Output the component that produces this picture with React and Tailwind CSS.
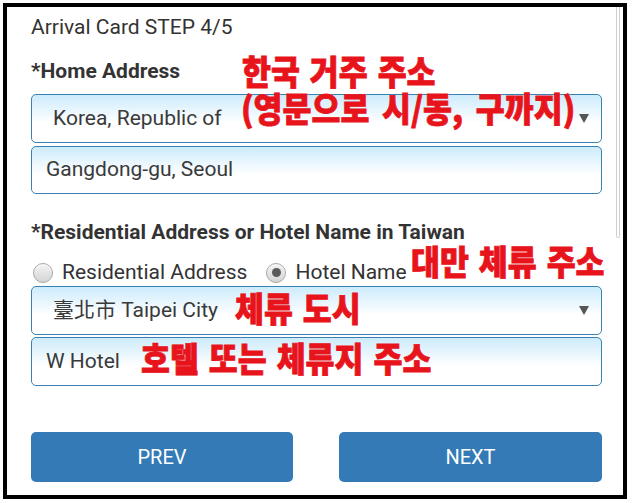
import React from 'react';

const FieldBox = ({ children, arrow, h = 'h-[49px]', pl = 'pl-[21px]' }) => (
    <div className={`${h} ${pl} pr-[10px] flex items-center justify-between rounded-[5px] border-[1.5px] border-[#3b82b3] bg-gradient-to-b from-[#cdebfb] via-white via-60% to-white text-[21px] text-[#3a3a3a]`}>
        <span>{children}</span>
        {arrow && (
            <svg width="10" height="9" viewBox="0 0 10 9" className="mr-[2px]">
                <path d="M0 0 L10 0 L5 9 Z" fill="#555" />
            </svg>
        )}
    </div>
);

const Radio = ({ checked }) => (
    <span className="w-[20px] h-[20px] rounded-full border border-[#a8a8a8] bg-gradient-to-b from-[#f4f4f4] to-[#d4d4d4] flex items-center justify-center shadow-[inset_0_1px_1px_rgba(255,255,255,0.8)]">
        {checked && <span className="w-[9px] h-[9px] rounded-full bg-[#5a5a5a]" />}
    </span>
);

const Note = ({ className, children }) => (
    <div className={`absolute origin-left scale-x-[0.925] leading-none text-[34px] font-black [word-spacing:3px] [-webkit-text-stroke:0.8px_#e8141c] text-[#e8141c] whitespace-nowrap ${className}`}
        style={{ fontFamily: '"Noto Sans CJK KR", sans-serif' }}
    >
        {children}
    </div>
);

const App = () => {
    return (
        <div className="w-[632px] h-[503px] bg-white pt-[3px] pl-[3px]" style={{ fontFamily: 'Roboto, "Noto Sans CJK TC", sans-serif' }}>
            <div className="relative w-[624px] h-[496px] border-4 border-black bg-white pl-[24px] pr-[21px]">
                {/* scrollbar */}
                <div className="absolute right-[3px] top-0 w-[4px] h-[231px] rounded-b-full border border-[#cfcfcf] border-t-0" />

                <div className="pt-[8px] leading-[24px] text-[21px] text-[#333]">Arrival Card STEP 4/5</div>

                <div className="mt-[20px] leading-[24px] text-[21px] font-bold text-[#333]">*Home Address</div>
                <div className="mt-[11px]">
                    <FieldBox arrow>Korea, Republic of</FieldBox>
                </div>
                <div className="mt-[3px]">
                    <FieldBox h="h-[48px]" pl="pl-[14px]">Gangdong-gu, Seoul</FieldBox>
                </div>

                <div className="mt-[26px] leading-[24px] text-[21px] font-bold text-[#333]">*Residential Address or Hotel Name in Taiwan</div>
                <div className="mt-[15px] h-[27px] flex items-center text-[21px] text-[#333]">
                    <div className="flex items-center gap-[9px] pl-[2px]">
                        <Radio />
                        <span>Residential Address</span>
                    </div>
                    <div className="flex items-center gap-[9px] ml-[19px]">
                        <Radio checked />
                        <span>Hotel Name</span>
                    </div>
                </div>
                <div>
                    <FieldBox arrow>臺北市 Taipei City</FieldBox>
                </div>
                <div className="mt-[2px]">
                    <FieldBox pl="pl-[14px]">W Hotel</FieldBox>
                </div>

                <div className="mt-[46px] flex justify-between">
                    <button className="w-[262px] h-[50px] rounded-[5px] bg-[#337ab7] text-white text-[20px]">PREV</button>
                    <button className="w-[263px] h-[50px] rounded-[5px] bg-[#337ab7] text-white text-[20px]">NEXT</button>
                </div>

                {/* red annotations */}
                <Note className="left-[235px] top-[47px]">한국 거주 주소</Note>
                <Note className="left-[234px] top-[84px] [word-spacing:6px]">(영문으로 시/동, 구까지)</Note>
                <Note className="left-[404px] top-[237px]">대만 체류 주소</Note>
                <Note className="left-[228px] top-[284px]">체류 도시</Note>
                <Note className="left-[134px] top-[334px]">호텔 또는 체류지 주소</Note>
            </div>
        </div>
    );
};

export default App;
